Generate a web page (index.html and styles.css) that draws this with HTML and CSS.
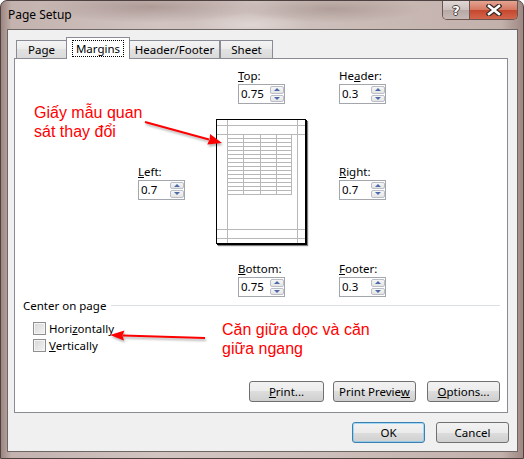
FILE: index.html
```html
<!DOCTYPE html>
<html lang="en">
<head>
    <meta charset="UTF-8">
    <title>Page Setup</title>
    <link rel="stylesheet" href="styles.css">
</head>
<body>
<div class="window">
    <div class="titlebar">
        <span class="title">Page Setup</span>
        <div class="caption-btns">
            <span class="cap help">?</span>
            <span class="cap close">
                <svg width="16" height="12" viewBox="0 0 16 12">
                    <path d="M3 2 L13 10 M13 2 L3 10" stroke="#3a2a28" stroke-width="5" stroke-linecap="square"/>
                    <path d="M3 2 L13 10 M13 2 L3 10" stroke="#fff" stroke-width="2.6" stroke-linecap="square"/>
                </svg>
            </span>
        </div>
    </div>

    <div class="client">
        <div class="tabs">
            <span class="tab t-page">Page</span>
            <span class="tab t-margins active"><span class="focus">Margins</span></span>
            <span class="tab t-hf">Header/Footer</span>
            <span class="tab t-sheet">Sheet</span>
        </div>

        <div class="panel">
            <div class="margins">
                <div class="field f-top">
                    <label><u>T</u>op:</label>
                    <div class="spin"><span class="val">0.75</span><span class="arrows"><i class="up"></i><i class="down"></i></span></div>
                </div>
                <div class="field f-header">
                    <label>He<u>a</u>der:</label>
                    <div class="spin"><span class="val">0.3</span><span class="arrows"><i class="up"></i><i class="down"></i></span></div>
                </div>
                <div class="field f-left">
                    <label><u>L</u>eft:</label>
                    <div class="spin"><span class="val">0.7</span><span class="arrows"><i class="up"></i><i class="down"></i></span></div>
                </div>
                <div class="preview">
                    <svg width="88" height="123" viewBox="0 0 88 123">
                        <path class="guides" d="M10.5 0 V123 M80.5 0 V123 M0 5.5 H88 M0 14.5 H88 M0 109.5 H88 M0 118.5 H88"/>
                        <path class="cells" d="M26.5 14 V75 M43.5 14 V75 M59.5 14 V75 M74.5 14 V75
                            M10 18.5 H75 M10 22.5 H75 M10 26.5 H75 M10 30.5 H75 M10 34.5 H75
                            M10 38.5 H75 M10 42.5 H75 M10 46.5 H75 M10 50.5 H75 M10 54.5 H75
                            M10 58.5 H75 M10 62.5 H75 M10 66.5 H75 M10 70.5 H75 M10 74.5 H75"/>
                    </svg>
                </div>
                <div class="field f-right">
                    <label><u>R</u>ight:</label>
                    <div class="spin"><span class="val">0.7</span><span class="arrows"><i class="up"></i><i class="down"></i></span></div>
                </div>
                <div class="field f-bottom">
                    <label><u>B</u>ottom:</label>
                    <div class="spin"><span class="val">0.75</span><span class="arrows"><i class="up"></i><i class="down"></i></span></div>
                </div>
                <div class="field f-footer">
                    <label><u>F</u>ooter:</label>
                    <div class="spin"><span class="val">0.3</span><span class="arrows"><i class="up"></i><i class="down"></i></span></div>
                </div>
            </div>

            <div class="group">
                <div class="group-title"><span>Center on page</span><span class="rule"></span></div>
                <div class="check"><span class="box"></span><span>Hori<u>z</u>ontally</span></div>
                <div class="check"><span class="box"></span><span><u>V</u>ertically</span></div>
            </div>

            <div class="panel-btns">
                <button class="btn b-print"><u>P</u>rint...</button>
                <button class="btn b-preview">Print Previe<u>w</u></button>
                <button class="btn b-options"><u>O</u>ptions...</button>
            </div>
        </div>

        <div class="dlg-btns">
            <button class="btn b-ok default">OK</button>
            <button class="btn b-cancel">Cancel</button>
        </div>
    </div>

    <div class="note note-1">Giấy mẫu quan<br>sát thay đổi</div>
    <div class="note note-2">Căn giữa dọc và căn<br>giữa ngang</div>

    <svg class="callouts" width="524" height="459" viewBox="0 0 524 459">
        <path d="M145 122 L209 139.5" stroke="#ff0000" stroke-width="2" fill="none"/>
        <path d="M222 143 L207.2 144.6 L209.6 139.6 L210 134 Z" fill="#ff0000"/>
        <path d="M205 338 L123 335.4" stroke="#ff0000" stroke-width="2" fill="none"/>
        <path d="M110 335 L124.5 330.6 L122.5 335.4 L124 340.4 Z" fill="#ff0000"/>
    </svg>
</div>
</body>
</html>
```

FILE: styles.css
```css
*{
    box-sizing: border-box;
}
body{
    margin: 0;
    font-family: "Noto Sans", "Segoe UI", sans-serif;
    font-size: 11.5px;
    color: #000;
}
.window{
    position: relative;
    width: 524px;
    height: 459px;
    border: 1px solid #4e4240;
    border-radius: 7px 7px 0 0;
    padding: 0 5px 6px 6px;
    display: flex;
    flex-direction: column;
    background:
        radial-gradient(ellipse 110px 16px at 150px 6px, rgba(110,80,75,.35), transparent),
        radial-gradient(ellipse 90px 14px at 330px 8px, rgba(110,85,80,.3), transparent),
        radial-gradient(ellipse 60px 12px at 250px 24px, rgba(255,255,255,.35), transparent),
        linear-gradient(90deg, #9c8580 0, #c3b2ae 2%, #d1c4c1 30%, #cdbfbb 60%, #c2b0ab 96%, #9f8883 100%);
}

/* title bar */
.titlebar{
    height: 28px;
    display: flex;
    align-items: flex-start;
}
.title{
    line-height: 28px;
    padding-left: 1px;
    font-size: 12px;
    color: #000;
}
.caption-btns{
    margin-left: auto;
    display: flex;
    height: 19px;
    border: 1px solid #6d5451;
    border-top: none;
    border-radius: 0 0 5px 5px;
    overflow: hidden;
}
.cap{
    display: flex;
    justify-content: center;
    align-items: center;
    height: 18px;
}
.help{
    width: 27px;
    border-right: 1px solid #6d5451;
    background: linear-gradient(#e0d7d5, #cbbfbc 50%, #b6a8a4 50%, #c6bab7);
    color: #fff;
    font-family: "DejaVu Sans", sans-serif;
    font-weight: bold;
    font-size: 13px;
    text-shadow: 1px 0 0 #4a3b39, -1px 0 0 #4a3b39, 0 1px 0 #4a3b39, 0 -1px 0 #4a3b39;
}
.close{
    width: 47px;
    background: linear-gradient(#e5a493, #d47760 50%, #c4462d 50%, #d2664c);
}

/* client area */
.client{
    flex: 1;
    background: #f0f0f0;
    border: 1px solid #6e6664;
    padding: 7px 9px 8px 6px;
    display: flex;
    flex-direction: column;
}
.tabs{
    display: flex;
    align-items: flex-end;
    height: 21px;
    padding-left: 2px;
    position: relative;
    z-index: 1;
}
.tab{
    height: 18px;
    border: 1px solid #898c95;
    border-bottom: none;
    background: linear-gradient(#f4f4f4, #ebebeb 50%, #e2e2e2 50%, #dadada);
    display: flex;
    justify-content: center;
    align-items: center;
    line-height: 15px;
}
.t-page{
    width: 51px;
}
.t-margins{
    width: 64px;
    margin-left: -1px;
}
.t-hf{
    width: 91px;
    margin-left: -1px;
}
.t-sheet{
    width: 53px;
}
.tab.active{
    height: 22px;
    margin-bottom: -1px;
    background: #fff;
    align-items: flex-start;
    padding-top: 2px;
}
.focus{
    border: 1px dotted #000;
    padding: 0 3px;
    line-height: 15px;
}

.panel{
    height: 355px;
    background: #fff;
    border: 1px solid #898c95;
    padding: 9px 7px 10px 0;
    display: flex;
    flex-direction: column;
}

/* margin fields */
.margins{
    display: grid;
    grid-template-columns: 78px 123px 1fr;
    grid-template-rows: 36px 125px 36px;
    row-gap: 15px;
    margin-left: 123px;
}
.field{
    display: flex;
    flex-direction: column;
    align-items: flex-start;
}
.field label{
    line-height: 15px;
    margin-bottom: 1px;
}
.f-top{
    grid-column: 2;
    grid-row: 1;
    margin-left: 22px;
}
.f-header{
    grid-column: 3;
    grid-row: 1;
}
.f-left{
    grid-column: 1;
    grid-row: 2;
    align-self: center;
}
.f-right{
    grid-column: 3;
    grid-row: 2;
    align-self: center;
}
.f-bottom{
    grid-column: 2;
    grid-row: 3;
    margin-left: 22px;
    padding-top: 2px;
}
.f-footer{
    grid-column: 3;
    grid-row: 3;
    padding-top: 2px;
}
.spin{
    width: 47px;
    height: 20px;
    border: 1px solid #a3a6ad;
    display: flex;
    align-items: center;
    padding: 1px 0 1px 2px;
}
.val{
    flex: 1;
    line-height: 16px;
}
.arrows{
    width: 14px;
    height: 16px;
    display: flex;
    flex-direction: column;
    gap: 1px;
}
.arrows i{
    flex: 1;
    display: flex;
    justify-content: center;
    align-items: center;
    border: 1px solid #b9bec7;
    border-radius: 2px;
    background: linear-gradient(#f6f6f6, #e4e4e4);
}
.arrows i::after{
    content: "";
    border-left: 3px solid transparent;
    border-right: 3px solid transparent;
}
.up::after{
    border-bottom: 3px solid #4c6aa8;
}
.down::after{
    border-top: 3px solid #4c6aa8;
}

.preview{
    grid-column: 2;
    grid-row: 2;
    width: 90px;
    height: 125px;
    border: 1px solid #000;
    box-shadow: 1px 1px 0 #000, 2px 2px 1px rgba(0,0,0,.5);
}
.preview svg{
    display: block;
}
.guides,
.cells{
    stroke: #b8b8b8;
    stroke-width: 1;
    fill: none;
}

/* center on page */
.group{
    margin-top: 3px;
}
.group-title{
    display: flex;
    align-items: center;
    gap: 5px;
    padding-left: 8px;
    line-height: 15px;
    margin-bottom: 7px;
}
.rule{
    flex: 1;
    height: 1px;
    background: #dcdfe3;
}
.check{
    display: flex;
    align-items: center;
    gap: 3px;
    height: 17px;
    padding-left: 18px;
}
.box{
    width: 13px;
    height: 13px;
    border: 1px solid #8e8f8f;
    background: linear-gradient(135deg, #d6d6d6, #f4f4f4);
    box-shadow: inset 0 0 0 1px #f4f4f4;
}

/* buttons */
.btn{
    height: 21px;
    border: 1px solid #707070;
    border-radius: 3px;
    background: linear-gradient(#f2f2f2, #ebebeb 50%, #dddddd 50%, #cfcfcf);
    font: inherit;
    color: #000;
    padding: 0;
    line-height: 17px;
}
.panel-btns{
    margin-top: auto;
    display: flex;
    justify-content: flex-end;
}
.b-print{
    width: 75px;
}
.b-preview{
    width: 83px;
    margin-left: 9px;
}
.b-options{
    width: 73px;
    margin-left: 11px;
}
.dlg-btns{
    margin-top: 9px;
    margin-right: -1px;
    display: flex;
    justify-content: flex-end;
    gap: 11px;
}
.b-ok,
.b-cancel{
    width: 73px;
}
.default{
    border-color: #3c7fb1;
    box-shadow: inset 0 0 0 1px rgba(110,200,245,.6);
}

/* red annotations */
.note{
    position: absolute;
    color: #ff0000;
    font-family: "Liberation Sans", Arial, sans-serif;
    font-size: 16px;
    line-height: 19px;
}
.note-1{
    left: 33px;
    top: 102px;
}
.note-2{
    left: 221px;
    top: 319px;
}
.callouts{
    position: absolute;
    left: -1px;
    top: -1px;
    pointer-events: none;
    filter: drop-shadow(1px 2px 1px rgba(0,0,0,.3));
}
```
